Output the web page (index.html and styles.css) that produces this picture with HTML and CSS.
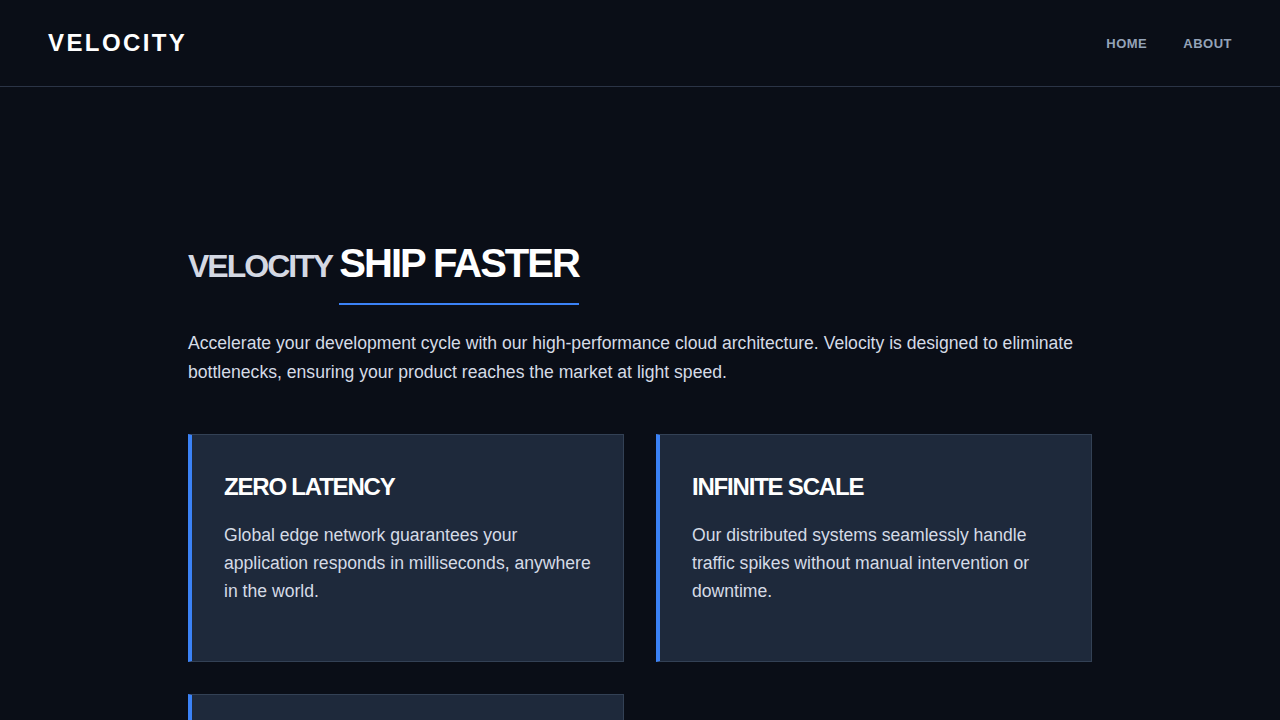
FILE: index.html
```html
<!DOCTYPE html>
<html lang="en">
<head>
<meta charset="utf-8">
<title>Velocity</title>
<link rel="stylesheet" href="styles.css">
</head>
<body>
<header class="site-header">
  <div class="logo">VELOCITY</div>
  <nav class="nav">
    <a href="#" class="nav-link">HOME</a>
    <a href="#" class="nav-link">ABOUT</a>
  </nav>
</header>
<main class="main">
  <h1 class="hero-title"><span class="hero-brand">VELOCITY </span><span class="hero-accent">SHIP FASTER</span></h1>
  <p class="hero-text">Accelerate your development cycle with our high-performance cloud architecture. Velocity is designed to eliminate bottlenecks, ensuring your product reaches the market at light speed.</p>
  <div class="cards">
    <div class="card">
      <h3 class="card-title">ZERO LATENCY</h3>
      <p class="card-text">Global edge network guarantees your application responds in milliseconds, anywhere in the world.</p>
    </div>
    <div class="card">
      <h3 class="card-title">INFINITE SCALE</h3>
      <p class="card-text">Our distributed systems seamlessly handle traffic spikes without manual intervention or downtime.</p>
    </div>
    <div class="card">
      <h3 class="card-title">ENTERPRISE SECURITY</h3>
      <p class="card-text">Bank-grade encryption and automated compliance keep your data protected at every layer of the stack.</p>
    </div>
  </div>
</main>
</body>
</html>
```
FILE: styles.css
```css
* { box-sizing: border-box; }
html, body { margin: 0; padding: 0; }
body {
  background: #0a0e17;
  color: #cbd5e1;
  font-family: "Liberation Sans", Arial, sans-serif;
}
.site-header {
  height: 87px;
  padding: 0 48px;
  display: flex;
  align-items: center;
  justify-content: space-between;
  border-bottom: 1px solid #2b3446;
}
.logo {
  font-size: 24px;
  font-weight: 700;
  letter-spacing: 0.1em;
  color: #ffffff;
}
.nav {
  display: flex;
  gap: 36px;
}
.nav-link {
  font-size: 13px;
  font-weight: 700;
  letter-spacing: 0.5px;
  color: #94a3b8;
  text-decoration: none;
}
.main {
  max-width: 904px;
  margin: 0 auto;
  padding-top: 152px;
}
.hero-title {
  margin: 0;
  font-size: 40px;
  line-height: 1.2;
  font-weight: 700;
  letter-spacing: -0.05em;
  color: #ffffff;
}
.hero-brand {
  font-size: 32px;
  word-spacing: 1px;
  color: #d4d8e3;
}
.hero-accent {
  display: inline-block;
  padding-bottom: 16px;
  border-bottom: 2px solid #3b82f6;
}
.hero-text {
  margin: 24px 0 47px;
  font-size: 17.6px;
  line-height: 1.65;
  color: #d5dbe6;
}
.cards {
  display: grid;
  grid-template-columns: 1fr 1fr;
  gap: 32px;
}
.card {
  background: #1e293b;
  border: 1px solid #334155;
  border-left: 4px solid #3b82f6;
  padding: 34px 32px 56px;
}
.card-title {
  margin: 0 0 16px;
  font-size: 24px;
  line-height: 1.5;
  font-weight: 700;
  letter-spacing: -0.05em;
  color: #ffffff;
}
.card-text {
  margin: 0;
  font-size: 17.6px;
  line-height: 1.6;
  color: #d5dbe6;
}
```
